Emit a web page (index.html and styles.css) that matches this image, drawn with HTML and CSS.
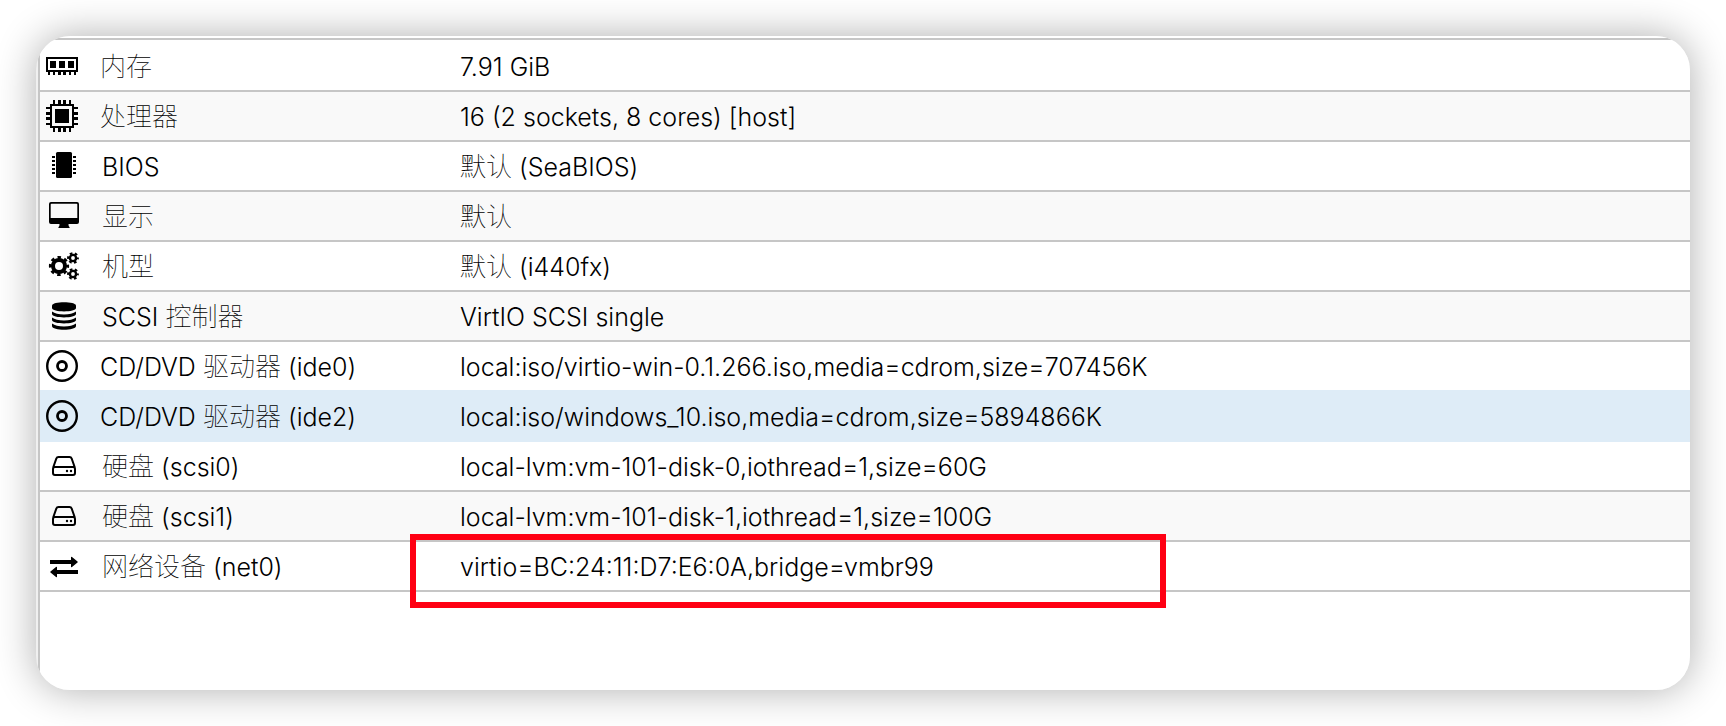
FILE: index.html
```
<!DOCTYPE html>
<html lang="zh-CN">
<head>
    <meta charset="UTF-8">
    <title>硬件</title>
    <link rel="stylesheet" href="styles.css">
</head>
<body>
<!-- 公用图标 -->
<svg class="defs" width="0" height="0">
    <symbol id="i-cd" viewBox="0 0 32 32">
        <circle cx="16" cy="16" r="14.8" fill="none" stroke="#000" stroke-width="2.4"/>
        <circle cx="16" cy="16" r="4.5" fill="none" stroke="#000" stroke-width="2.8"/>
    </symbol>
    <symbol id="i-hdd" viewBox="0 0 24 20">
        <path d="M1 12 L4.3 2.6 Q4.9 1 6.5 1 H17.5 Q19.1 1 19.7 2.6 L23 12 M1 13 Q1 11 3 11 H21 Q23 11 23 13 V17 Q23 19 21 19 H3 Q1 19 1 17 Z" fill="none" stroke="#000" stroke-width="2"/>
        <circle cx="15" cy="15" r="1.2"/><circle cx="19" cy="15" r="1.2"/>
    </symbol>
</svg>
<div class="panel">
    <div class="grid">
        <table>
            <tr>
                <td class="name"><div class="key"><svg class="icon wide" viewBox="0 0 32 32">
                    <path d="M0 7h32v15H0z M2 9v11h28V9z" fill-rule="evenodd"/>
                    <path d="M4 11h6v7H4z M13 11h6v7h-6z M22 11h6v7h-6z M2 22h2v3H2z M7 22h2v3H7z M12 22h3v3h-3z M17 22h3v3h-3z M23 22h2v3h-2z M28 22h2v3h-2z"/>
                </svg><p><span class="cn">内存</span></p></div></td>
                <td class="value">7.91 GiB</td>
            </tr>
            <tr>
                <td class="name"><div class="key"><svg class="icon wide" viewBox="0 0 32 32">
                    <path d="M4 4h24v24H4z M6 6v20h20V6z" fill-rule="evenodd"/>
                    <path d="M9 9h14v14H9z M7 0h2v4H7z M12 0h3v4h-3z M17 0h3v4h-3z M23 0h2v4h-2z M7 28h2v4H7z M12 28h3v4h-3z M17 28h3v4h-3z M23 28h2v4h-2z M0 7h4v2H0z M0 12h4v3H0z M0 17h4v3H0z M0 23h4v2H0z M28 7h4v2h-4z M28 12h4v3h-4z M28 17h4v3h-4z M28 23h4v2h-4z"/>
                </svg><p><span class="cn">处理器</span></p></div></td>
                <td class="value">16 (2 sockets, 8 cores) [host]</td>
            </tr>
            <tr>
                <td class="name"><div class="key"><svg class="icon" viewBox="0 0 36 32">
                    <rect x="10" y="2" width="16" height="26" rx="1.5"/>
                    <path d="M6 6h3v2H6z M6 10h3v2H6z M6 14h3v2H6z M6 18h3v2H6z M6 22h3v2H6z M27 6h3v2h-3z M27 10h3v2h-3z M27 14h3v2h-3z M27 18h3v2h-3z M27 22h3v2h-3z"/>
                </svg><p>BIOS</p></div></td>
                <td class="value"><span class="cn">默认</span> (SeaBIOS)</td>
            </tr>
            <tr>
                <td class="name"><div class="key"><svg class="icon" viewBox="0 0 36 32">
                    <path d="M5 2h26q2 0 2 2v18q0 2-2 2h-8.500q0 2 .5 2.500 1 .5 .5 1.500h-11q-.5-1 .5-1.500.5-.5 .5-2.500H5q-2 0-2-2V4q0-2 2-2z M5.500 3.700q-.8 0-.8 .8V18h26.600V4.500q0-.8-.8-.8z" fill-rule="evenodd"/>
                </svg><p><span class="cn">显示</span></p></div></td>
                <td class="value"><span class="cn">默认</span></td>
            </tr>
            <tr>
                <td class="name"><div class="key"><svg class="icon" viewBox="0 0 36 32">
                    <g fill="none" stroke="#000">
                        <circle cx="13" cy="16" r="6" stroke-width="4"/>
                        <circle cx="13" cy="16" r="8.600" stroke-width="3" stroke-dasharray="3.400 3.354" stroke-dashoffset="1.700"/>
                        <circle cx="27" cy="8" r="3.100" stroke-width="2.400"/>
                        <circle cx="27" cy="8" r="4.800" stroke-width="2.200" stroke-dasharray="2.600 2.427" stroke-dashoffset="1.300"/>
                        <circle cx="27" cy="24" r="3.100" stroke-width="2.400"/>
                        <circle cx="27" cy="24" r="4.800" stroke-width="2.200" stroke-dasharray="2.600 2.427" stroke-dashoffset="1.300"/>
                    </g>
                </svg><p><span class="cn">机型</span></p></div></td>
                <td class="value"><span class="cn">默认</span> (i440fx)</td>
            </tr>
            <tr>
                <td class="name"><div class="key"><svg class="icon" viewBox="0 0 36 32">
                    <path d="M6 5.500C6 1 30 1 30 5.500V8C30 12.500 6 12.500 6 8z"/>
                    <path d="M6 11.500q4 3 12 3t12-3V14C30 18.500 6 18.500 6 14z"/>
                    <path d="M6 17.500q4 3 12 3t12-3V20C30 24.500 6 24.500 6 20z"/>
                    <path d="M6 23.500q4 3 12 3t12-3V26C30 31 6 31 6 26z"/>
                </svg><p>SCSI <span class="cn">控制器</span></p></div></td>
                <td class="value">VirtIO SCSI single</td>
            </tr>
            <tr class="before-on">
                <td class="name"><div class="key"><svg class="icon wide"><use href="#i-cd"/></svg><p>CD/DVD <span class="cn">驱动器</span> (ide0)</p></div></td>
                <td class="value">local:iso/virtio-win-0.1.266.iso,media=cdrom,size=707456K</td>
            </tr>
            <tr class="on">
                <td class="name"><div class="key"><svg class="icon wide"><use href="#i-cd"/></svg><p>CD/DVD <span class="cn">驱动器</span> (ide2)</p></div></td>
                <td class="value">local:iso/windows_10.iso,media=cdrom,size=5894866K</td>
            </tr>
            <tr>
                <td class="name"><div class="key"><svg class="icon"><use href="#i-hdd" x="6" y="6" width="24" height="20"/></svg><p><span class="cn">硬盘</span> (scsi0)</p></div></td>
                <td class="value">local-lvm:vm-101-disk-0,iothread=1,size=60G</td>
            </tr>
            <tr>
                <td class="name"><div class="key"><svg class="icon"><use href="#i-hdd" x="6" y="6" width="24" height="20"/></svg><p><span class="cn">硬盘</span> (scsi1)</p></div></td>
                <td class="value">local-lvm:vm-101-disk-1,iothread=1,size=100G</td>
            </tr>
            <tr>
                <td class="name"><div class="key"><svg class="icon" viewBox="0 0 36 32">
                    <path d="M4 10h21V7.500q0-1 1-.5l5.500 4.500q.6 .5 0 1L26 17q-1 .6-1-.5V14H4z"/>
                    <path d="M32 20H11v-2.500q0-1-1-.5l-5.500 4.500q-.6 .5 0 1L10 27q1 .6 1-.5V24h21z"/>
                </svg><p><span class="cn">网络设备</span> (net0)</p></div></td>
                <td class="value">virtio=BC:24:11:D7:E6:0A,bridge=vmbr99<span class="mark"></span></td>
            </tr>
        </table>
    </div>
</div>
</body>
</html>
```
FILE: styles.css
```
*{
    margin:0;
    padding:0;
    box-sizing: border-box;
}
body{
    display: flex;
    min-height: 100vh;
    padding:36px;
    background: #fff;
    color:#000;
    font-family: Inter, "Noto Sans CJK SC", sans-serif;
    font-size: 25px;
    font-weight: 300;
    line-height: 32px;
}
.defs{
    position: absolute;
}
.panel{
    display: flex;
    flex: 1;
    padding-left: 2px;
    border-radius: 34px;
    overflow: hidden;
    background: #f0f0f0;
    box-shadow: 0 0 40px rgba(0,0,0,.32);
}
.grid{
    flex: 1;
    border-left: 2px solid #c6c6c6;
    background: #fff;
    padding-top: 2px;
}
table{
    width: 100%;
    border-collapse: separate;
    border-spacing: 0;
    border-top: 2px solid #c6c6c6;
}
td{
    height: 50px;
    border-bottom: 2px solid #c6c6c6;
    vertical-align: middle;
    white-space: nowrap;
}
tr:first-child td{
    height: 52px;
    padding-top: 2px;
}
tr:nth-child(even) td{
    background: #f9f9f9;
}
tr.before-on td{
    border-color:#deecf7;
}
tr.on td{
    background: #deecf7;
    border-color:#deecf7;
}
.name{
    width: 370px;
    padding-left: 6px;
}
.key{
    display: flex;
    align-items: center;
}
.key p{
    padding-top: 2px;
}
.cn{
    font-family: "Noto Sans CJK SC", sans-serif;
    font-size: 26px;
    font-weight: 100;
    line-height: 1;
}
.icon{
    flex: none;
    width: 36px;
    height: 32px;
    margin-right: 20px;
}
.icon.wide{
    width: 32px;
    margin-right: 22px;
}
.value{
    position: relative;
    padding-top: 2px;
    padding-left: 50px;
}
tr:first-child .value{
    padding-top: 4px;
}
/*红框标注*/
.mark{
    position: absolute;
    left:0;
    top:-8px;
    width: 756px;
    height: 74px;
    border:6px solid #ff0013;
}
```
